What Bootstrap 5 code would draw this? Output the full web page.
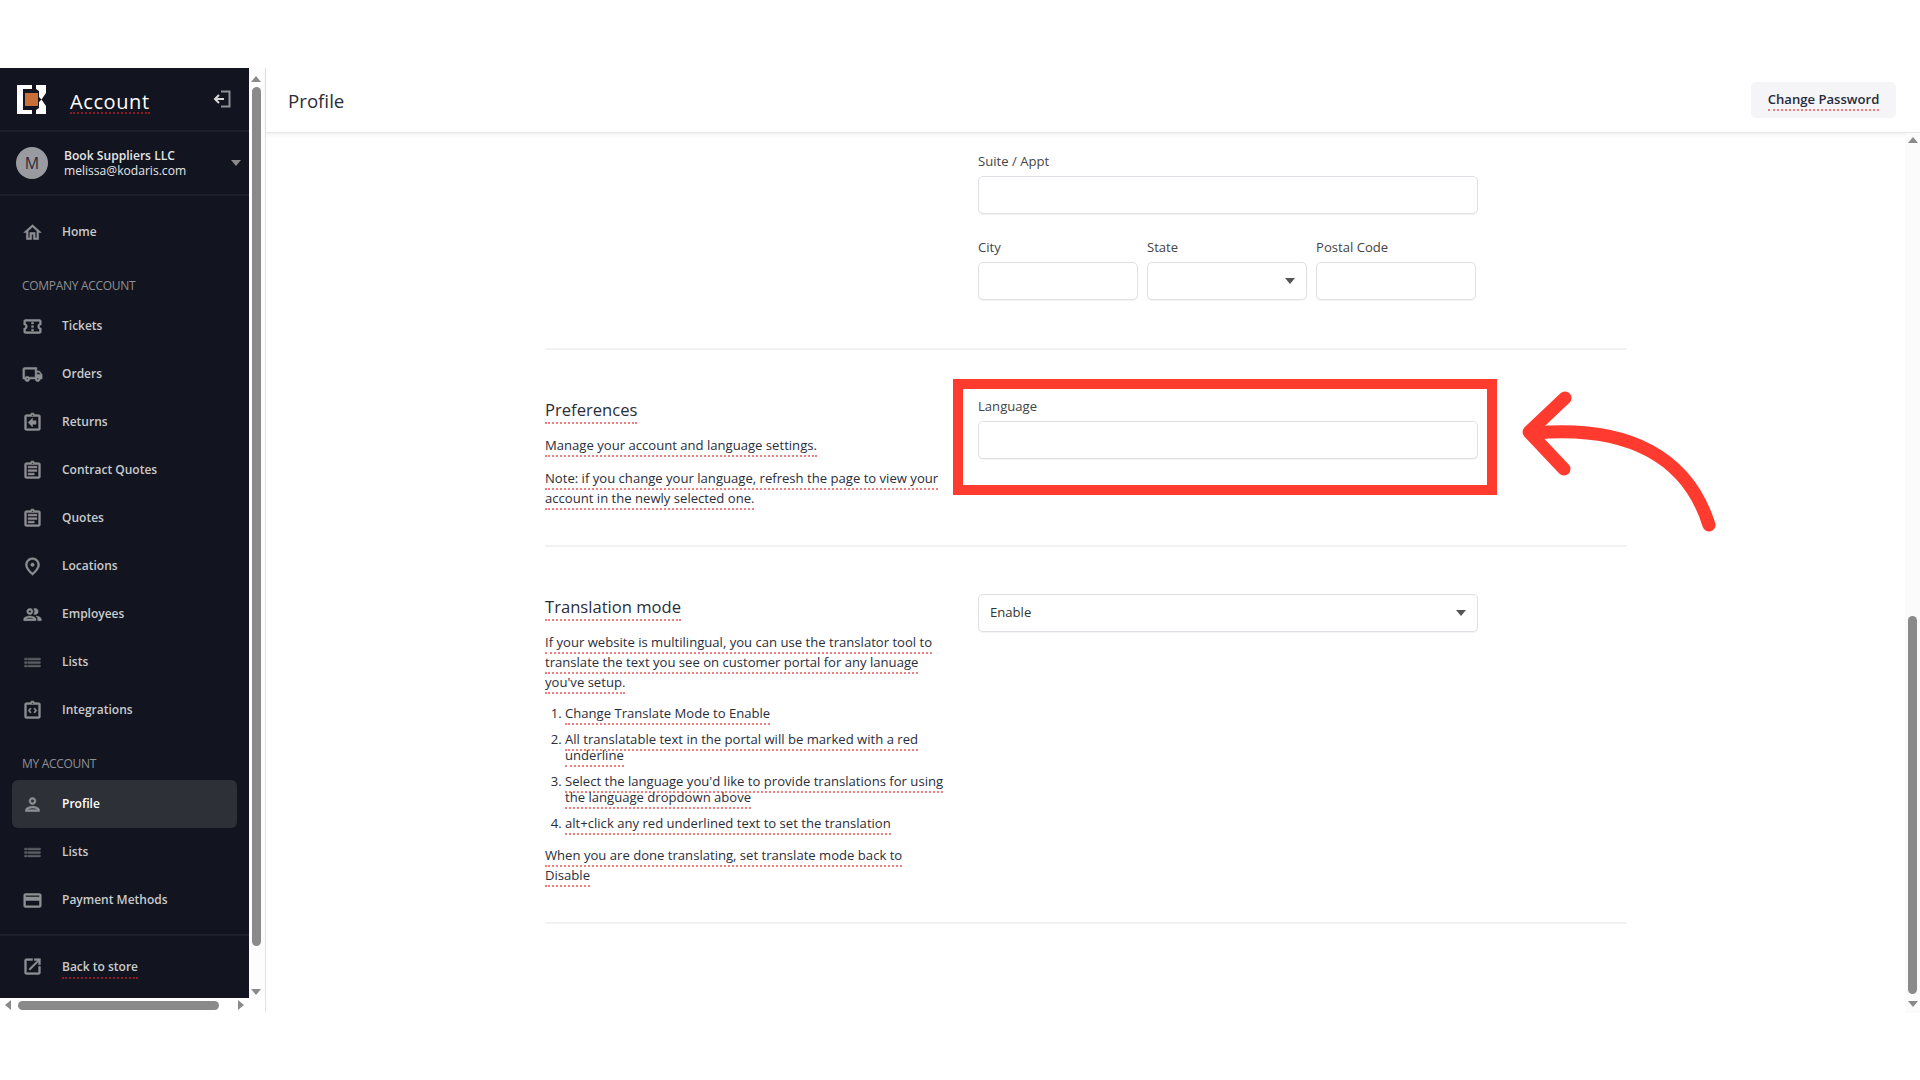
<!DOCTYPE html>
<html lang="en">
<head>
    <meta charset="UTF-8">
    <meta name="viewport" content="width=device-width, initial-scale=1.0">
    <title>Profile</title>
    <link href="https://cdn.jsdelivr.net/npm/bootstrap@5.3.0/dist/css/bootstrap.min.css" rel="stylesheet">
    <style>
        html, body { height: 100%; overflow: hidden; background: #fff; }
        body { font-family: "Open Sans", "Noto Sans", sans-serif; font-size: 13.1px; color: #2a2d3a; }
        .app-frame { position: absolute; top: 68px; left: 0; right: 0; height: 944px; }
        .side-wrap { width: 266px; border-right: 1px solid #e2e2e2; }
        .side-panel { width: 249px; height: 930px; background: #12151f; }
        .side-head { height: 64px; border-bottom: 2px solid #1d2029; padding-left: 17px; padding-right: 18px; }
        .side-title { font-size: 20px; color: #fff; margin-left: 23px; margin-top: 7px; letter-spacing: .6px; line-height: 20px; display: inline-block; border-bottom: 2px dotted #8c1c24; }
        .side-user { height: 64px; border-bottom: 2px solid #1d2029; padding-left: 16px; padding-right: 8px; }
        .user-avatar { width: 32px; height: 32px; border-radius: 50%; background: #9a9ba0; color: #2a2d3a; font-size: 16px; }
        .user-name { font-size: 12.100px; line-height: 15px; color: #e4e4e6; margin-left: 16px; }
        .user-name b { font-weight: 600; }
        .side-nav { padding-top: 12px; }
        .side-item { height: 48px; padding-left: 20px; width: 225px; color: #c9cacd; font-size: 12px; font-weight: 600; border-radius: 6px; }
        .side-item svg, .foot-link svg { width: 21px; height: 21px; margin: 0 19.5px 0 1.5px; fill: #8f9094; stroke: #8f9094; stroke-width: .6; flex: none; }
        .side-item.is-active { margin-left: 12px; padding-left: 8px; background: #2e3038; color: #fff; }
        .side-label { height: 46px; padding: 22px 0 0 22px; color: #8f9094; font-size: 12px; line-height: 16px; letter-spacing: -.3px; }
        .foot-link { margin-top: 10px; border-top: 2px solid #1d2029; height: 63px; padding-left: 20px; color: #c9cacd; font-size: 12px; font-weight: 600; }
        .foot-link .tr-mark-dark { margin-top: 3px; }
        .tr-mark { border-bottom: 2px dotted #ee8080; padding-bottom: 1px; }
        .tr-mark-dark { border-bottom: 2px dotted #8c1c24; padding-bottom: 1px; }
        .bar-track { background: #8a8a8a; border-radius: 5px; }
        .side-vbar { width: 16px; height: 930px; background: #fdfdfd; padding-right: 2px; }
        .side-vbar .bar-track { width: 9px; height: 859px; margin: 5px 0 43px; }
        .side-hbar { height: 14px; width: 249px; background: #fff; padding: 0 5px; }
        .side-hbar .bar-track { width: 201px; height: 9px; margin-left: 7px; }
        .main-head { height: 65px; border-bottom: 1px solid #e6e6e6; box-shadow: 0 2px 4px rgba(0,0,0,.06); padding: 0 24px 0 22px; }
        .main-title { font-size: 18.700px; color: #2a2d3a; padding-top: 2px; }
        .pw-btn { background: #f5f5f8; border: 0; border-radius: 5px; height: 36px; width: 145px; font-size: 13.100px; font-weight: 600; color: #262a3a; }
        .main-body { height: 879px; }
        .form-area { width: 1082px; margin-left: 279px; padding-top: 19px; }
        .field-label { font-size: 13.100px; color: #444; line-height: 18px; margin-bottom: 6px; display: block; }
        .field-box { height: 38px; border: 1px solid #dfe0e5; border-radius: 5px; background: #fff; box-shadow: 0 1px 1px rgba(0,0,0,.05); width: 100%; padding: 0 11px; color: #333; font-size: 13.100px; }
        .field-arrow { width: 0; height: 0; border-left: 5px solid transparent; border-right: 5px solid transparent; border-top: 6px solid #555; }
        .field-col { width: 500px; margin-left: 433px; }
        .city-row { gap: 9px; margin-top: 24px; }
        .city-row > div { width: 160px; }
        .sect-line { height: 2px; background: #f2f2f2; border: 0; margin: 0; opacity: 1; }
        .sect-row { padding-top: 47px; padding-bottom: 37px; }
        .sect-left { width: 433px; padding-right: 33px; }
        .sect-right { width: 500px; }
        .sect-head { font-size: 16.600px; line-height: 25px; color: #2a2d3a; margin: 0 0 13px; font-weight: 400; }
        .sect-text { line-height: 20px; margin: 0 0 13px; }
        .sect-text:last-child { margin-bottom: 0; }
        .sect-list { padding-left: 20px; margin: 0 -8px 14px 0; }
        .sect-list li { line-height: 16px; margin-bottom: 10px; }
        .sect-list li:last-child { margin-bottom: 0; }
        .main-vbar { width: 15px; background: #fbfbfb; height: 880px; }
        .main-vbar .bar-track { width: 9px; height: 378px; margin: 473px 0 7px; }
        .red-box { position: absolute; left: 953px; top: 379px; width: 544px; height: 116px; border: 10px solid #ff3a2e; }
        .red-arrow { position: absolute; left: 1500px; top: 380px; }
        .caret-up { border-left: 5px solid transparent; border-right: 5px solid transparent; border-bottom: 6px solid #8a8a8a; width: 0; height: 0; }
        .caret-down { border-left: 5px solid transparent; border-right: 5px solid transparent; border-top: 6px solid #8a8a8a; width: 0; height: 0; }
        .caret-left { border-top: 5px solid transparent; border-bottom: 5px solid transparent; border-right: 6px solid #8a8a8a; width: 0; height: 0; }
        .caret-right { border-top: 5px solid transparent; border-bottom: 5px solid transparent; border-left: 6px solid #8a8a8a; width: 0; height: 0; }
    </style>
</head>
<body>
    <div class="app-frame d-flex">
        <div class="side-wrap d-flex flex-column flex-shrink-0">
            <div class="d-flex">
                <div class="side-panel d-flex flex-column">
                    <div class="side-head d-flex align-items-center">
                        <svg width="30" height="29" viewBox="0 0 30 29"><path fill="#fff" d="M0 0h15v4H6v21h9v4H0zM19 0h10v8l-4.500 6.500L22 12V6l-3-2zM19 29h10v-8l-4.500-6.500L22 17v6l-3 2z"/><rect x="8" y="8" width="13" height="13" fill="#c9703a"/></svg>
                        <span class="side-title">Account</span>
                        <svg class="ms-auto" width="18" height="18" viewBox="0 0 18 18" fill="none" stroke-width="2"><path stroke="#8f9094" d="M8 1.500h8.500v15H8"/><path stroke="#d8d8da" d="M11 9H2.500M6 5 2 9l4 4"/></svg>
                    </div>
                    <div class="side-user d-flex align-items-center">
                        <div class="user-avatar d-flex align-items-center justify-content-center">M</div>
                        <div class="user-name"><b>Book Suppliers LLC</b><br>melissa@kodaris.com</div>
                        <div class="ms-auto caret-down"></div>
                    </div>
                    <div class="side-nav">
                        <div class="side-item d-flex align-items-center"><svg viewBox="0 0 24 24"><path d="M12 5.690l5 4.500V18h-2v-6H9v6H7v-7.810l5-4.500M12 3L2 12h3v8h6v-6h2v6h6v-8h3L12 3z"/></svg>Home</div>
                        <div class="side-label">COMPANY ACCOUNT</div>
                        <div class="side-item d-flex align-items-center"><svg viewBox="0 0 24 24"><path d="M22 10V6c0-1.110-.9-2-2-2H4c-1.100 0-1.990.89-1.990 2v4c1.100 0 1.990.9 1.990 2s-.89 2-2 2v4c0 1.100.9 2 2 2h16c1.100 0 2-.9 2-2v-4c-1.100 0-2-.9-2-2s.9-2 2-2zm-2-1.460c-1.190.69-2 1.990-2 3.460s.81 2.770 2 3.460V18H4v-2.540c1.190-.69 2-1.990 2-3.460 0-1.480-.8-2.770-1.990-3.460L4 6h16v2.540zM11 15h2v2h-2zm0-4h2v2h-2zm0-4h2v2h-2z"/></svg>Tickets</div>
                        <div class="side-item d-flex align-items-center"><svg viewBox="0 0 24 24"><path d="M20 8h-3V4H3c-1.100 0-2 .9-2 2v11h2c0 1.660 1.340 3 3 3s3-1.340 3-3h6c0 1.660 1.340 3 3 3s3-1.340 3-3h2v-5l-3-4zm-.5 1.500 1.960 2.500H17V9.500h2.500zM6 18c-.55 0-1-.45-1-1s.45-1 1-1 1 .45 1 1-.45 1-1 1zm2.220-3c-.55-.61-1.330-1-2.220-1s-1.670.39-2.220 1H3V6h12v9H8.220zM18 18c-.55 0-1-.45-1-1s.45-1 1-1 1 .45 1 1-.45 1-1 1z"/></svg>Orders</div>
                        <div class="side-item d-flex align-items-center"><svg viewBox="0 0 24 24"><path d="M19 3h-4.180C14.400 1.840 13.300 1 12 1c-1.300 0-2.400.84-2.820 2H5c-1.100 0-2 .9-2 2v14c0 1.100.9 2 2 2h14c1.100 0 2-.9 2-2V5c0-1.100-.9-2-2-2zm-7 0c.55 0 1 .45 1 1s-.45 1-1 1-1-.45-1-1 .45-1 1-1zm7 16H5V5h14v14zM12 7v3h4v4h-4v3l-5-5z"/></svg>Returns</div>
                        <div class="side-item d-flex align-items-center"><svg viewBox="0 0 24 24"><path d="M19 3h-4.180C14.400 1.840 13.300 1 12 1c-1.300 0-2.400.84-2.820 2H5c-1.100 0-2 .9-2 2v14c0 1.100.9 2 2 2h14c1.100 0 2-.9 2-2V5c0-1.100-.9-2-2-2zm-7 0c.55 0 1 .45 1 1s-.45 1-1 1-1-.45-1-1 .45-1 1-1zm7 16H5V5h14v14zM7 15h7v2H7zm0-4h10v2H7zm0-4h10v2H7z"/></svg>Contract Quotes</div>
                        <div class="side-item d-flex align-items-center"><svg viewBox="0 0 24 24"><path d="M19 3h-4.180C14.400 1.840 13.300 1 12 1c-1.300 0-2.400.84-2.820 2H5c-1.100 0-2 .9-2 2v14c0 1.100.9 2 2 2h14c1.100 0 2-.9 2-2V5c0-1.100-.9-2-2-2zm-7 0c.55 0 1 .45 1 1s-.45 1-1 1-1-.45-1-1 .45-1 1-1zm7 16H5V5h14v14zM7 15h7v2H7zm0-4h10v2H7zm0-4h10v2H7z"/></svg>Quotes</div>
                        <div class="side-item d-flex align-items-center"><svg viewBox="0 0 24 24"><path d="M12 12c-1.100 0-2-.9-2-2s.9-2 2-2 2 .9 2 2-.9 2-2 2zm6-1.800C18 6.570 15.350 4 12 4s-6 2.570-6 6.200c0 2.340 1.950 5.440 6 9.140 4.050-3.700 6-6.800 6-9.140zM12 2c4.200 0 8 3.220 8 8.200 0 3.320-2.670 7.250-8 11.800-5.330-4.550-8-8.480-8-11.800C4 5.220 7.800 2 12 2z"/></svg>Locations</div>
                        <div class="side-item d-flex align-items-center"><svg viewBox="0 0 24 24"><path d="M9 13.750c-2.340 0-7 1.170-7 3.500V19h14v-1.750c0-2.330-4.660-3.500-7-3.500zM4.340 17c.84-.58 2.870-1.250 4.660-1.250s3.820.67 4.660 1.250H4.340zM9 12c1.930 0 3.500-1.570 3.500-3.500S10.930 5 9 5 5.500 6.570 5.500 8.500 7.070 12 9 12zm0-5c.83 0 1.500.67 1.500 1.500S9.830 10 9 10s-1.500-.67-1.500-1.500S8.170 7 9 7zm7.040 6.810c1.160.84 1.960 1.960 1.960 3.440V19h4v-1.750c0-2.020-3.500-3.170-5.960-3.440zM15 12c1.930 0 3.500-1.570 3.500-3.500S16.930 5 15 5c-.54 0-1.040.13-1.500.35.63.89 1 1.980 1 3.150s-.37 2.260-1 3.150c.46.220.96.35 1.500.35z"/></svg>Employees</div>
                        <div class="side-item d-flex align-items-center"><svg viewBox="0 0 24 24"><path opacity=".6" d="M3 7h3v2H3zM7 7h14v2H7zM3 11h3v2H3zM7 11h14v2H7zM3 15h3v2H3zM7 15h14v2H7z"/></svg>Lists</div>
                        <div class="side-item d-flex align-items-center"><svg viewBox="0 0 24 24"><path d="M19 3h-4.180C14.400 1.840 13.300 1 12 1c-1.300 0-2.400.84-2.820 2H5c-1.100 0-2 .9-2 2v14c0 1.100.9 2 2 2h14c1.100 0 2-.9 2-2V5c0-1.100-.9-2-2-2zm-7 0c.55 0 1 .45 1 1s-.45 1-1 1-1-.45-1-1 .45-1 1-1zm7 16H5V5h14v14zM9.500 9 7 12l2.500 3 1-1-1.500-2 1.500-2zM14.500 9l-1 1 1.500 2-1.500 2 1 1 2.500-3z"/></svg>Integrations</div>
                        <div class="side-label">MY ACCOUNT</div>
                        <div class="side-item is-active d-flex align-items-center"><svg viewBox="0 0 24 24"><path d="M12 6c1.100 0 2 .9 2 2s-.9 2-2 2-2-.9-2-2 .9-2 2-2m0 10c2.700 0 5.800 1.290 6 2H6c.23-.72 3.310-2 6-2m0-12C9.790 4 8 5.790 8 8s1.790 4 4 4 4-1.790 4-4-1.790-4-4-4zm0 10c-2.670 0-8 1.340-8 4v2h16v-2c0-2.660-5.330-4-8-4z"/></svg>Profile</div>
                        <div class="side-item d-flex align-items-center"><svg viewBox="0 0 24 24"><path opacity=".6" d="M3 7h3v2H3zM7 7h14v2H7zM3 11h3v2H3zM7 11h14v2H7zM3 15h3v2H3zM7 15h14v2H7z"/></svg>Lists</div>
                        <div class="side-item d-flex align-items-center"><svg viewBox="0 0 24 24"><path d="M20 4H4c-1.110 0-1.990.89-1.990 2L2 18c0 1.110.89 2 2 2h16c1.110 0 2-.89 2-2V6c0-1.110-.89-2-2-2zm0 14H4v-6h16v6zm0-10H4V6h16v2z"/></svg>Payment Methods</div>
                    </div>
                    <div class="foot-link d-flex align-items-center">
                        <svg viewBox="0 0 24 24"><path d="M19 19H5V5h7V3H5c-1.110 0-2 .9-2 2v14c0 1.100.89 2 2 2h14c1.100 0 2-.9 2-2v-7h-2v7zM14 3v2h3.590l-9.830 9.830 1.410 1.410L19 6.410V10h2V3h-7z"/></svg>
                        <span class="tr-mark-dark">Back to store</span>
                    </div>
                </div>
                <div class="side-vbar d-flex flex-column align-items-center">
                    <div class="caret-up mt-2"></div>
                    <div class="bar-track"></div>
                    <div class="caret-down"></div>
                </div>
            </div>
            <div class="side-hbar d-flex align-items-center"><div class="caret-left"></div><div class="bar-track"></div><div class="caret-right ms-auto"></div></div>
        </div>
        <div class="flex-grow-1 d-flex flex-column">
            <div class="main-head d-flex align-items-center justify-content-between">
                <span class="main-title">Profile</span>
                <button class="pw-btn"><span class="tr-mark">Change Password</span></button>
            </div>
            <div class="main-body d-flex">
                <div class="flex-grow-1">
                    <div class="form-area">
                        <div class="field-col">
                            <label class="field-label">Suite / Appt</label>
                            <input class="field-box" type="text">
                            <div class="d-flex city-row">
                                <div><label class="field-label">City</label><input class="field-box" type="text"></div>
                                <div><label class="field-label">State</label><div class="field-box d-flex align-items-center justify-content-end"><div class="field-arrow"></div></div></div>
                                <div><label class="field-label">Postal Code</label><input class="field-box" type="text"></div>
                            </div>
                        </div>
                        <hr class="sect-line mt-5">
                        <div class="d-flex sect-row">
                            <div class="sect-left">
                                <h5 class="sect-head"><span class="tr-mark">Preferences</span></h5>
                                <p class="sect-text"><span class="tr-mark">Manage your account and language settings.</span></p>
                                <p class="sect-text"><span class="tr-mark">Note: if you change your language, refresh the page to view your account in the newly selected one.</span></p>
                            </div>
                            <div class="sect-right">
                                <label class="field-label">Language</label>
                                <input class="field-box" type="text">
                            </div>
                        </div>
                        <hr class="sect-line">
                        <div class="d-flex sect-row">
                            <div class="sect-left">
                                <h5 class="sect-head"><span class="tr-mark">Translation mode</span></h5>
                                <p class="sect-text"><span class="tr-mark">If your website is multilingual, you can use the translator tool to translate the text you see on customer portal for any lanuage you've setup.</span></p>
                                <ol class="sect-list">
                                    <li><span class="tr-mark">Change Translate Mode to Enable</span></li>
                                    <li><span class="tr-mark">All translatable text in the portal will be marked with a red underline</span></li>
                                    <li><span class="tr-mark">Select the language you'd like to provide translations for using the language dropdown above</span></li>
                                    <li><span class="tr-mark">alt+click any red underlined text to set the translation</span></li>
                                </ol>
                                <p class="sect-text"><span class="tr-mark">When you are done translating, set translate mode back to Disable</span></p>
                            </div>
                            <div class="sect-right">
                                <div class="field-box d-flex align-items-center justify-content-between">Enable<div class="field-arrow"></div></div>
                            </div>
                        </div>
                        <hr class="sect-line">
                    </div>
                </div>
                <div class="main-vbar d-flex flex-column align-items-center">
                    <div class="caret-up mt-1"></div>
                    <div class="bar-track"></div>
                    <div class="caret-down"></div>
                </div>
            </div>
        </div>
    </div>
    <div class="red-box"></div>
    <svg class="red-arrow" width="230" height="160" viewBox="1500 380 230 160" fill="none" stroke="#ff3a2e" stroke-width="13" stroke-linecap="round" stroke-linejoin="round"><path d="M1565 398 1529 432 1564 469"/><path d="M1709 525C1688 458 1630 425 1535 433"/></svg>
    <script src="https://cdn.jsdelivr.net/npm/bootstrap@5.3.0/dist/js/bootstrap.bundle.min.js"></script>
</body>
</html>
